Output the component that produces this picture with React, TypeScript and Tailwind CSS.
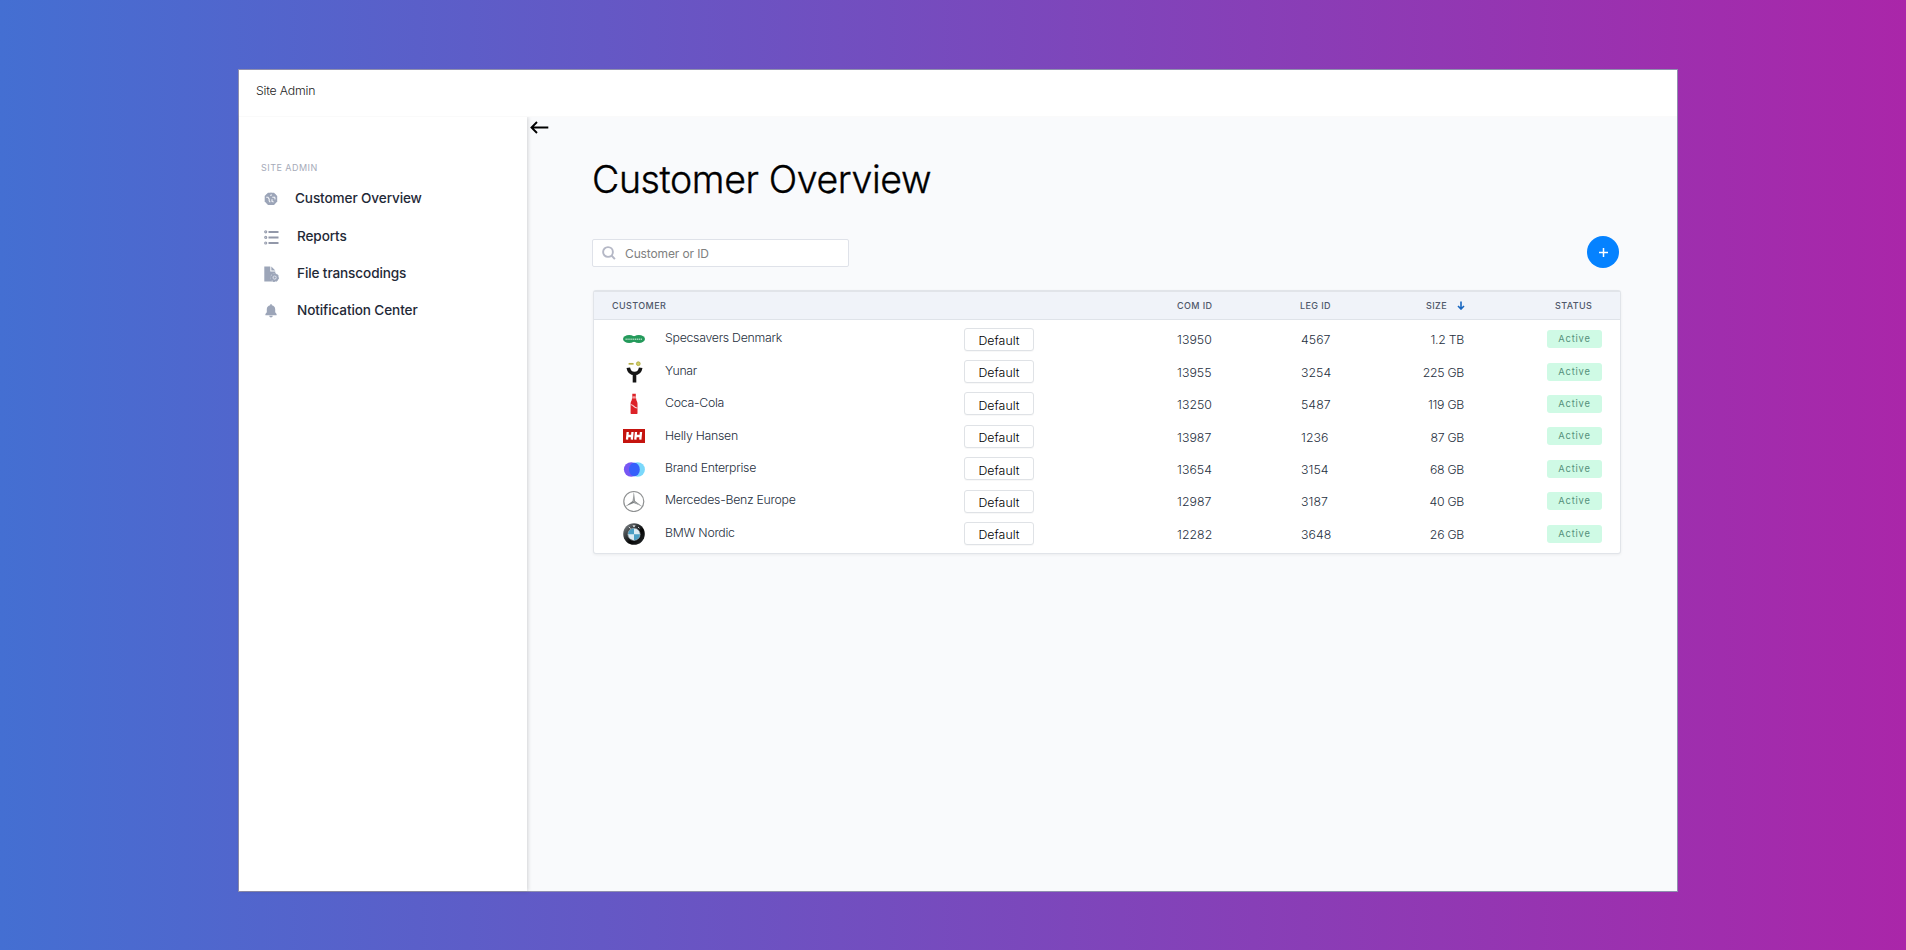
import React from "react";

function GlobeIcon() {
  return (
    <svg width="14" height="14" viewBox="0 0 14 14" className="block">
      <path d="M4 .8h6L13.2 4v5.6L10 12.9H4L.7 9.6V4z" fill="#9ca5b8" />
      <circle cx="7" cy="6.8" r="6" fill="#9ca5b8" />
      <path d="M2.2 5.2H4l1.2 2v1.600l1 1.400" fill="none" stroke="#f3f5f9" strokeWidth="1.100" />
      <path d="M6.300 3.600l1.500-.8M8.300 5.200h2.400l.4 2.200M8 7.200v2.200l1.600.6" fill="none" stroke="#f3f5f9" strokeWidth="1.100" />
    </svg>
  );
}

function ListIcon() {
  return (
    <svg width="15" height="15" viewBox="0 0 15 15" className="block">
      <g fill="none" stroke="#9aa0b0" strokeWidth="1.2">
        <circle cx="1.7" cy="1.8" r="1" />
        <circle cx="1.7" cy="7.4" r="1" />
        <circle cx="1.7" cy="13" r="1" />
      </g>
      <path d="M4.5 2h10M4.5 7.5h10M4.5 13h10" stroke="#9298a9" strokeWidth="1.9" />
    </svg>
  );
}

function FileIcon() {
  return (
    <svg width="15" height="16" viewBox="0 0 15 16" className="block">
      <path d="M.3.5h6v5h5v10h-11z" fill="#9ca5b8" />
      <path d="M7.3.5l4 4h-4z" fill="#9ca5b8" />
      <circle cx="10.600" cy="11.600" r="4.100" fill="#d4d9e3" />
      <circle cx="10.600" cy="11.600" r="3" fill="none" stroke="#9ca5b8" strokeWidth="1.700" />
      <circle cx="10.600" cy="11.600" r="3.800" fill="none" stroke="#9ca5b8" strokeWidth="1.100" strokeDasharray="1.500 1.400" />
      <path d="M9.800 10.100l2.200 1.500-2.200 1.500z" fill="#9ca5b8" />
    </svg>
  );
}

function BellIcon() {
  return (
    <svg width="14" height="14" viewBox="0 0 14 14" className="block">
      <path d="M6.200.3h1.600v1c2.200.4 3.400 2 3.400 4v3l1.400 1.800v1.100H1.400v-1.100L2.800 8.300v-3c0-2 1.200-3.600 3.400-4zM5.300 11.800h3.400c0 1-.7 1.600-1.700 1.600s-1.700-.6-1.700-1.600z" fill="#9ca5b8" />
    </svg>
  );
}

function Specsavers() {
  return (
    <svg width="22" height="22" viewBox="0 0 22 22">
      <ellipse cx="6.200" cy="11" rx="6.200" ry="4" fill="#249a5b" />
      <ellipse cx="15.800" cy="11" rx="6.200" ry="4" fill="#249a5b" />
      <path d="M9 8.300h4v5.400H9z" fill="#249a5b" />
      <path d="M2.500 11.200h17" stroke="#a5d5ba" strokeWidth="1.500" strokeDasharray="1.300 .6" />
    </svg>
  );
}

function Yunar() {
  return (
    <svg width="22" height="22" viewBox="0 0 22 22">
      <path d="M5.600 2.800h5" stroke="#b5ad45" strokeWidth="1.700" />
      <circle cx="15.300" cy="2.700" r="1.900" fill="#d2cf64" stroke="#aaa53c" strokeWidth=".8" />
      <path d="M5.300 6.800c.6 3.900 3 5.700 6.200 5.700s5.600-1.800 6.200-5.700M11.500 12v9.500" fill="none" stroke="#151515" strokeWidth="3.600" />
    </svg>
  );
}

function Cola() {
  return (
    <svg width="22" height="22" viewBox="0 0 22 22">
      <path d="M9.300.8h3.500v2.400l.5 3.500c.3 1.300 1.200 2.300 1.200 4v9.200c0 .8-.5 1.200-1.300 1.200H8.900c-.8 0-1.300-.4-1.300-1.200v-9.200c0-1.700.9-2.700 1.200-4l.5-3.500z" fill="#dc2228" />
      <path d="M9.300 3.200h3.500l.3 2.300H9z" fill="#f49a9c" />
      <path d="M7.800 11.800c2.600-.8 3 3.600 6.600 3.200" stroke="#fbd9d9" strokeWidth="1.200" fill="none" />
    </svg>
  );
}

function Helly() {
  return (
    <svg width="22" height="22" viewBox="0 0 22 22">
      <rect y="4" width="22" height="14" fill="#c5140f" />
      <path d="M4.700 7L4 14.700M9.500 7l-.7 7.700M4.300 11h5M13 7l-.7 7.700M18 7l-.7 7.700M12.700 11h5" stroke="#fff" strokeWidth="2.300" />
    </svg>
  );
}

function Brand() {
  return (
    <svg width="22" height="22" viewBox="0 0 22 22">
      <circle cx="14.600" cy="11.500" r="7.300" fill="#7ad8fb" />
      <circle cx="8.200" cy="11.500" r="7.300" fill="#7757f3" />
      <ellipse cx="11.400" cy="11.500" rx="5.400" ry="6.800" fill="#3560fb" />
    </svg>
  );
}

function Mercedes() {
  return (
    <svg width="22" height="22" viewBox="0 0 22 22">
      <circle cx="10.800" cy="11.500" r="10" fill="#fff" stroke="#8f9192" strokeWidth="1.200" />
      <path d="M10.800 1.800l1.200 9.100 7.400 5.700-8.600-3.500-8.600 3.500 7.400-5.700z" fill="#7e8284" />
      <path d="M10.800 3v8.800l6.500 3.700" fill="none" stroke="#d4d6d7" strokeWidth=".5" />
    </svg>
  );
}

function Bmw() {
  return (
    <svg width="22" height="22" viewBox="0 0 22 22">
      <defs>
        <linearGradient id="bmw-ring" x1="0" y1="0" x2="1" y2="1">
          <stop offset="0" stopColor="#8c9194" />
          <stop offset=".35" stopColor="#3a3f42" />
          <stop offset=".6" stopColor="#050505" />
          <stop offset="1" stopColor="#2a2f32" />
        </linearGradient>
      </defs>
      <circle cx="11" cy="11" r="10.800" fill="url(#bmw-ring)" />
      <path d="M5.800 3.800l1.700 1.800M10 2l1 2 1-2M15 4l1.400 1.200" stroke="#d8dcdf" strokeWidth="1" fill="none" />
      <circle cx="11" cy="11.300" r="6.100" fill="#dcebf2" />
      <path d="M11 11.300V5.200a6.100 6.100 0 0 0-6.100 6.100zM11 11.300v6.100a6.100 6.100 0 0 0 6.100-6.100z" fill="#4a9fc4" />
      <circle cx="11" cy="11.300" r="6.200" fill="none" stroke="#8b979d" strokeWidth=".6" />
    </svg>
  );
}

const nav = [
  { label: "Customer Overview", icon: <GlobeIcon />, row: "h-[38px]", text: "-ml-px" },
  { label: "Reports", icon: <ListIcon />, row: "h-[38px]", text: "pl-px" },
  { label: "File transcodings", icon: <FileIcon />, row: "h-[36px]", text: "pl-px" },
  { label: "Notification Center", icon: <BellIcon />, row: "h-[38px]", text: "pl-px" },
];

const rows = [
  { name: "Specsavers Denmark", logo: <Specsavers />, com: "13950", leg: "4567", size: "1.2 TB" },
  { name: "Yunar", logo: <Yunar />, com: "13955", leg: "3254", size: "225 GB" },
  { name: "Coca-Cola", logo: <Cola />, com: "13250", leg: "5487", size: "119 GB" },
  { name: "Helly Hansen", logo: <Helly />, com: "13987", leg: "1236", size: "87 GB" },
  { name: "Brand Enterprise", logo: <Brand />, com: "13654", leg: "3154", size: "68 GB" },
  { name: "Mercedes-Benz Europe", logo: <Mercedes />, com: "12987", leg: "3187", size: "40 GB" },
  { name: "BMW Nordic", logo: <Bmw />, com: "12282", leg: "3648", size: "26 GB" },
];

const columns = "grid grid-cols-[71px_299px_213px_124px_99px_84px_1fr]";

export default function App() {
  return (
    <div className="h-[950px] w-[1906px] overflow-hidden bg-linear-to-r/srgb from-[#446fd2] to-[#aa26a9] pt-[69px] pl-[238px] font-['Inter',sans-serif]">
      <div className="flex h-[823px] w-[1440px] flex-col border border-[#8f8fae] bg-white">
        <header className="z-20 flex h-[47px] shrink-0 items-center border-b border-[#fafafa] bg-white pb-[3px] pl-[17px] text-[12.3px] font-light tracking-[-0.2px] text-[#222]">
          Site Admin
        </header>
        <div className="flex min-h-0 flex-1">
          <aside className="z-10 w-[288px] shrink-0 bg-white pt-[46px] pl-[22px] shadow-[1px_0_4px_rgba(0,0,0,0.16)]">
            <h2 className="h-[10px] text-[9px] leading-[10px] tracking-[0.47px] text-[#a6abb9]">SITE ADMIN</h2>
            <nav className="mt-[7px]">
              {nav.map((item) => (
                <a key={item.label} className={`flex items-center ${item.row}`}>
                  <span className="flex w-[35px] shrink-0 pl-[3px]">{item.icon}</span>
                  <span className={`pb-px text-[13.6px] font-medium tracking-[-0.12px] text-[#1f2937] ${item.text}`}>{item.label}</span>
                </a>
              ))}
            </nav>
          </aside>
          <main className="flex-1 bg-[#f9fafc]">
            <div className="h-[38px] pt-[4px] pl-[3px]">
              <svg width="19" height="13" viewBox="0 0 19 13" className="block" fill="none" stroke="#000" strokeWidth="1.900">
                <path d="M18.300 6.500H1.500M7 1L1.500 6.500 7 12" />
              </svg>
            </div>
            <div className="ml-[65px] w-[1029px]">
              <h1 className="h-[49px] text-[37.5px] leading-[49px] font-light tracking-[-0.4px] text-black [-webkit-text-stroke:0.35px_#000]">Customer Overview</h1>
              <div className="mt-[32px] flex items-start justify-between pr-[2px]">
                <label className="mt-[3px] flex h-[28px] w-[257px] items-center rounded-[2px] border border-[#dfe2e9] bg-white pl-[9px]">
                  <svg width="14" height="14" viewBox="0 0 14 14" fill="none" stroke="#b5b8c6" strokeWidth="1.900">
                    <circle cx="6" cy="6" r="4.900" />
                    <path d="M9.500 9.500l3.400 3.700" />
                  </svg>
                  <span className="ml-[9px] pt-px text-[12px] tracking-[-0.12px] text-[#808080]">Customer or ID</span>
                </label>
                <button className="flex size-8 items-center justify-center rounded-full bg-[#0582ff]">
                  <svg width="9" height="9" viewBox="0 0 9 9" stroke="#fff" strokeWidth="1.500">
                    <path d="M4.500 0v9M0 4.500h9" />
                  </svg>
                </button>
              </div>
              <section className="mt-[22px] ml-px h-[264px] rounded-[3px] border border-t-2 border-[#e1e4e9] bg-white shadow-[0_1px_3px_rgba(0,0,0,0.06)]">
                <div className={`${columns} h-[28px] items-center border-b border-[#dfe3e9] bg-[#f0f3f9] pt-px text-[9px] font-medium tracking-[0.4px] text-[#4f586a]`}>
                  <span className="col-span-3 pl-[18px]">CUSTOMER</span>
                  <span>COM ID</span>
                  <span className="-ml-px">LEG ID</span>
                  <span className="flex items-center gap-[10px] pl-[26px]">
                    SIZE
                    <svg width="8" height="9" viewBox="0 0 8 9" className="-mt-px" fill="none" stroke="#1766c0" strokeWidth="1.600">
                      <path d="M4 .5V8M1 5l3 3 3-3" />
                    </svg>
                  </span>
                  <span className="pl-[71px]">STATUS</span>
                </div>
                <div className="pt-[3px]">
                  {rows.map((row) => (
                    <div key={row.name} className={`${columns} h-[32.4px] items-center text-[12.3px] font-light text-[#262f40]`}>
                      <span className="flex pl-[29px]">{row.logo}</span>
                      <span className="pb-px tracking-[-0.27px]">{row.name}</span>
                      <span>
                        <button className="flex h-[23px] w-[70px] items-center justify-center rounded-[3px] border border-[#dfe2e6] bg-white pt-[4px] text-[12.3px] font-light tracking-[0.05px] text-black shadow-[0_1px_1px_rgba(0,0,0,0.03)]">
                          Default
                        </button>
                      </span>
                      <span className="pt-[3px] tracking-[0.05px]">{row.com}</span>
                      <span className="pt-[3px] tracking-[0.05px]">{row.leg}</span>
                      <span className="pt-[3px] pr-[20px] text-right tracking-[-0.28px]">{row.size}</span>
                      <span className="flex pl-[63px]">
                        <span className="flex h-[18px] w-[55px] items-center justify-center rounded-[3px] bg-[#cffae5] text-[9.3px] font-normal tracking-[0.8px] text-[#55907b]">
                          Active
                        </span>
                      </span>
                    </div>
                  ))}
                </div>
              </section>
            </div>
          </main>
        </div>
      </div>
    </div>
  );
}
